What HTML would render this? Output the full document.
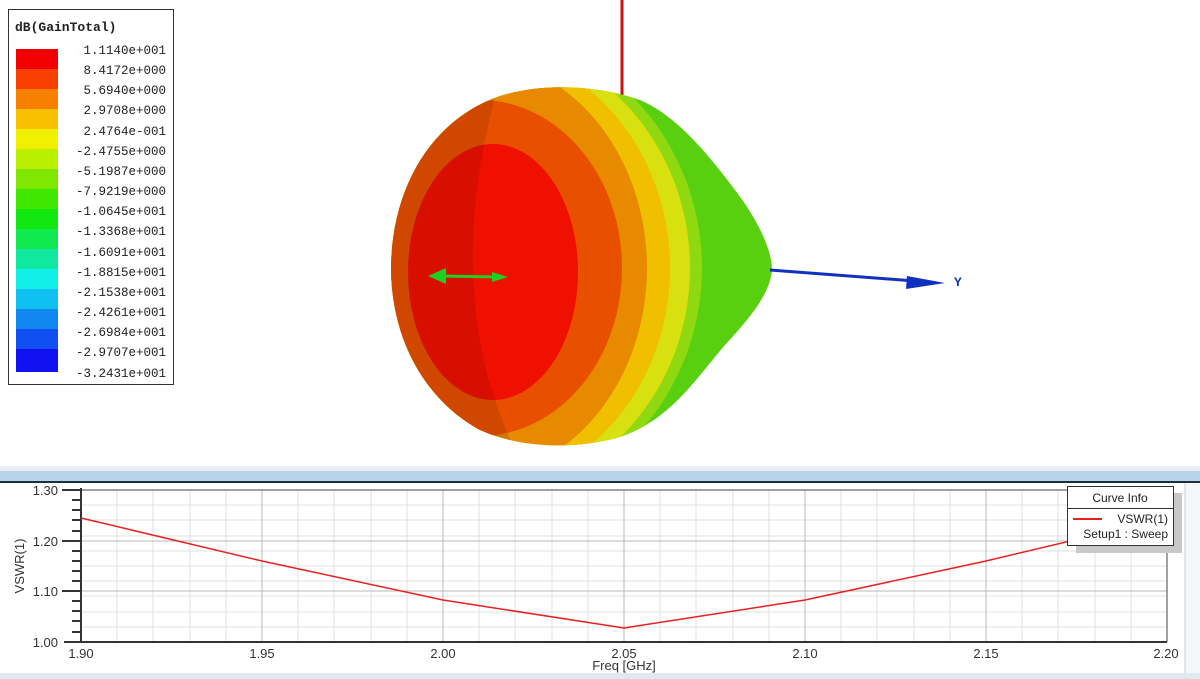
<!DOCTYPE html>
<html><head><style>
body{margin:0;width:1200px;height:679px;overflow:hidden;background:#fff;font-family:"Liberation Sans",sans-serif}
</style></head><body>
<svg width="1200" height="679" xmlns="http://www.w3.org/2000/svg" style="position:absolute;left:0;top:0">
<defs>
<clipPath id="pear"><path d="M391 270 C391 190 430 120 500 96 C545 82 600 86 640 100 C675 115 705 150 735 190 C758 220 772 250 772 270 C770 295 748 320 725 345 C695 380 670 420 620 437 C575 450 520 448 480 430 C425 400 392 340 391 270Z"/></clipPath>
</defs>
<rect x="0" y="0" width="1200" height="470" fill="#fff"/>
<line x1="622" y1="0" x2="622" y2="98" stroke="#d01010" stroke-width="3"/>
<g clip-path="url(#pear)">
<rect x="380" y="80" width="400" height="380" fill="#58d010"/>
<ellipse cx="470" cy="268" rx="232" ry="240" fill="#90d810"/>
<ellipse cx="470" cy="268" rx="220" ry="232" fill="#d8e010"/>
<ellipse cx="470" cy="268" rx="200" ry="222" fill="#f0c000"/>
<ellipse cx="470" cy="268" rx="177" ry="210" fill="#e88a00"/>
<ellipse cx="480" cy="268" rx="142" ry="168" fill="#e85000"/>
<ellipse cx="493" cy="272" rx="85" ry="128" fill="#f01000"/>
<path d="M380 80 L500 80 Q465 200 475 300 Q480 380 520 460 L380 460Z" fill="#000" opacity="0.1"/>
</g>
<line x1="440" y1="276" x2="500" y2="277" stroke="#20d020" stroke-width="3"/>
<path d="M428 276 L446 268 L446 284Z" fill="#20d020"/>
<path d="M508 277 L492 272 L492 282Z" fill="#20d020"/>
<line x1="770" y1="270" x2="915" y2="281" stroke="#1030c0" stroke-width="3"/>
<path d="M945 283 L907 276 L906 289Z" fill="#1030c0"/>
<text x="954" y="286" font-family="Liberation Mono,monospace" font-size="13" font-weight="bold" fill="#1030c0">Y</text>
<rect x="8.5" y="9.5" width="165" height="375" fill="#fff" stroke="#333"/>
<text x="15" y="31" font-family="Liberation Mono,monospace" font-size="13" font-weight="bold" fill="#222">dB(GainTotal)</text>
<g>
<rect x="16" y="49" width="42" height="21" fill="#f00000"/>
<rect x="16" y="69" width="42" height="21" fill="#f84000"/>
<rect x="16" y="89" width="42" height="21" fill="#f88000"/>
<rect x="16" y="109" width="42" height="21" fill="#f8c000"/>
<rect x="16" y="129" width="42" height="21" fill="#f0f000"/>
<rect x="16" y="149" width="42" height="21" fill="#b8f000"/>
<rect x="16" y="169" width="42" height="21" fill="#80e800"/>
<rect x="16" y="189" width="42" height="21" fill="#40e800"/>
<rect x="16" y="209" width="42" height="21" fill="#10e810"/>
<rect x="16" y="229" width="42" height="21" fill="#10e850"/>
<rect x="16" y="249" width="42" height="21" fill="#10e8a0"/>
<rect x="16" y="269" width="42" height="21" fill="#10f0e8"/>
<rect x="16" y="289" width="42" height="21" fill="#10c0f0"/>
<rect x="16" y="309" width="42" height="21" fill="#1088f0"/>
<rect x="16" y="329" width="42" height="21" fill="#1050f0"/>
<rect x="16" y="349" width="42" height="23" fill="#1010f0"/>
</g>
<g font-family="Liberation Mono,monospace" font-size="12.5" fill="#222" text-anchor="end">
<text x="166" y="54">1.1140e+001</text>
<text x="166" y="74">8.4172e+000</text>
<text x="166" y="94">5.6940e+000</text>
<text x="166" y="114">2.9708e+000</text>
<text x="166" y="135">2.4764e-001</text>
<text x="166" y="155">-2.4755e+000</text>
<text x="166" y="175">-5.1987e+000</text>
<text x="166" y="195">-7.9219e+000</text>
<text x="166" y="215">-1.0645e+001</text>
<text x="166" y="235">-1.3368e+001</text>
<text x="166" y="256">-1.6091e+001</text>
<text x="166" y="276">-1.8815e+001</text>
<text x="166" y="296">-2.1538e+001</text>
<text x="166" y="316">-2.4261e+001</text>
<text x="166" y="336">-2.6984e+001</text>
<text x="166" y="356">-2.9707e+001</text>
<text x="166" y="377">-3.2431e+001</text>
</g>
<rect x="0" y="466" width="1200" height="5" fill="#e8eef4"/>
<rect x="0" y="471" width="1200" height="10" fill="#b8d4ea"/>
<rect x="0" y="481" width="1200" height="2" fill="#1a3040"/>
<rect x="0" y="483" width="1200" height="190" fill="#fff"/>
<rect x="0" y="673" width="1200" height="6" fill="#e0e8f0"/>
<rect x="1185" y="483" width="15" height="190" fill="#f4f6f8"/>
<line x1="1185" y1="483" x2="1185" y2="673" stroke="#ccc"/>
<g stroke="#e0e0e0">
<path d="M117 490V642M153 490V642M190 490V642M226 490V642M298 490V642M334 490V642M371 490V642M407 490V642M479 490V642M515 490V642M552 490V642M588 490V642M660 490V642M696 490V642M733 490V642M769 490V642M841 490V642M877 490V642M914 490V642M950 490V642M1022 490V642M1058 490V642M1095 490V642M1131 490V642"/>
<path d="M81 505H1167M81 520H1167M81 536H1167M81 551H1167M81 566H1167M81 581H1167M81 596H1167M81 612H1167M81 627H1167"/>
</g>
<g stroke="#b8b8b8">
<path d="M262 490V642M443 490V642M624 490V642M805 490V642M986 490V642"/>
<path d="M81 541H1167M81 591H1167"/>
</g>
<line x1="81" y1="490" x2="1167" y2="490" stroke="#444"/>
<line x1="1167" y1="490" x2="1167" y2="642" stroke="#444"/>
<line x1="81" y1="488" x2="81" y2="643" stroke="#333" stroke-width="2"/>
<line x1="64" y1="642" x2="1167" y2="642" stroke="#333" stroke-width="2"/>
<g stroke="#333" stroke-width="2">
<path d="M62 490H81M62 541H81M62 591H81M72 500H81M72 510H81M72 520H81M72 531H81M72 551H81M72 561H81M72 571H81M72 581H81M72 601H81M72 611H81M72 621H81M72 632H81"/>
</g>
<polyline points="81,518 262,561 443,600 624,628 805,600 986,561 1167,518" fill="none" stroke="#e82020" stroke-width="1.5"/>
<g font-size="13" fill="#333">
<text x="58" y="495" text-anchor="end">1.30</text>
<text x="58" y="546" text-anchor="end">1.20</text>
<text x="58" y="596" text-anchor="end">1.10</text>
<text x="58" y="647" text-anchor="end">1.00</text>
<g text-anchor="middle">
<text x="81" y="658">1.90</text><text x="262" y="658">1.95</text><text x="443" y="658">2.00</text>
<text x="624" y="658">2.05</text><text x="805" y="658">2.10</text><text x="986" y="658">2.15</text><text x="1166" y="658">2.20</text>
</g>
<text x="624" y="670" text-anchor="middle">Freq [GHz]</text>
<text transform="translate(24,566) rotate(-90)" text-anchor="middle">VSWR(1)</text>
</g>
<rect x="1076" y="493" width="106" height="60" fill="#c8c8c8"/>
<rect x="1067.5" y="486.5" width="106" height="59" fill="#fff" stroke="#333"/>
<line x1="1067" y1="508.5" x2="1173" y2="508.5" stroke="#333"/>
<text x="1120" y="502" font-size="12" text-anchor="middle" fill="#222">Curve Info</text>
<line x1="1073" y1="519" x2="1102" y2="519" stroke="#e82020" stroke-width="2"/>
<text x="1168" y="523" font-size="12" text-anchor="end" fill="#222">VSWR(1)</text>
<text x="1168" y="538" font-size="12" text-anchor="end" fill="#222">Setup1 : Sweep</text>
</svg>
</body></html>
